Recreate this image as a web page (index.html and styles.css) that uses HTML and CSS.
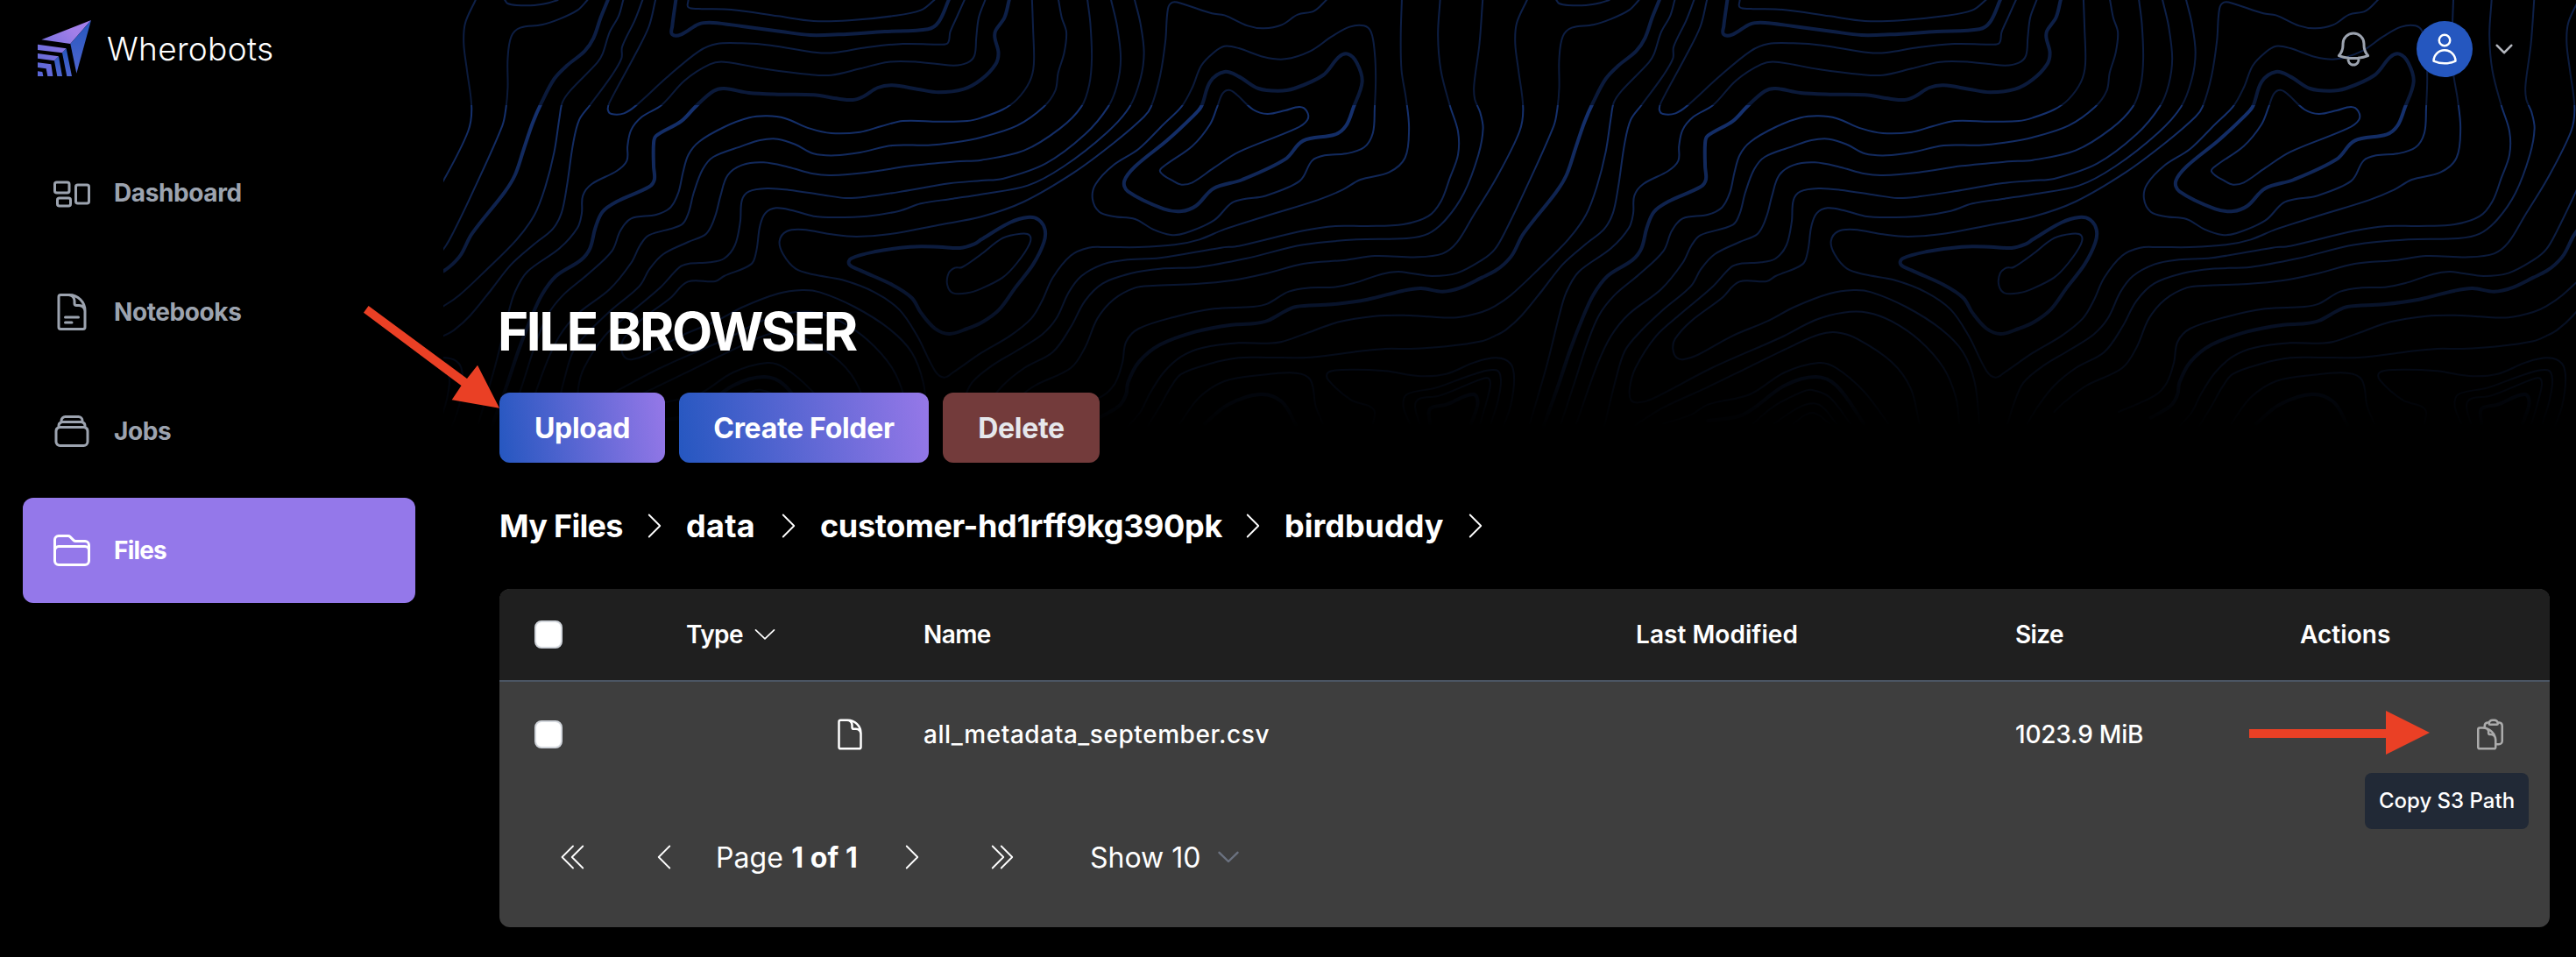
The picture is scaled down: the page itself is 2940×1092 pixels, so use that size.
FILE: index.html
```
<!DOCTYPE html>
<html lang="en">
<head>
<meta charset="utf-8">
<title>Wherobots - File Browser</title>
<link rel="stylesheet" href="styles.css">
</head>
<body>
<div class="app">
  <svg class="contours" viewBox="15 0 5963 1470" preserveAspectRatio="none" aria-hidden="true"></svg>

  <aside class="sidebar">
    <div class="brand">
      <svg class="brand-mark" viewBox="129 72 183 192">
        <defs>
          <linearGradient id="lilac" gradientUnits="userSpaceOnUse" x1="130" y1="240" x2="250" y2="110"><stop offset="0" stop-color="#5a66d6"/><stop offset="1" stop-color="#a27fe9"/></linearGradient>
          <linearGradient id="blue" x1="0" y1="0" x2="0" y2="1"><stop offset="0" stop-color="#2456bd"/><stop offset="1" stop-color="#5066d0"/></linearGradient>
        </defs>
        <path fill="url(#lilac)" d="M312 72L142 139L241 153ZM129 155L227 169L213 184L129 174ZM129 186L201 196L186 211L129 203ZM129 217L175 223L181 264H163L158 238L129 234ZM129 247L145 249L148 264H129Z"/>
        <path fill="url(#blue)" d="M312 72L241 153L262 254Z"/>
        <path fill="url(#blue)" d="M227 169L246 264H229L213 184ZM201 196L213 264H196L186 211Z"/>
      </svg>
      <span class="brand-name">Wherobots</span>
    </div>
    <nav class="nav">
      <a class="nav-item">
        <svg class="icon-lg" viewBox="0 0 24 24"><path d="M2.25 7.125C2.25 6.504 2.754 6 3.375 6h6c.621 0 1.125.504 1.125 1.125v3.75c0 .621-.504 1.125-1.125 1.125h-6a1.125 1.125 0 01-1.125-1.125v-3.75zM14.25 8.625c0-.621.504-1.125 1.125-1.125h5.25c.621 0 1.125.504 1.125 1.125v8.25c0 .621-.504 1.125-1.125 1.125h-5.25a1.125 1.125 0 01-1.125-1.125v-8.25zM3.75 16.125c0-.621.504-1.125 1.125-1.125h5.25c.621 0 1.125.504 1.125 1.125v2.25c0 .621-.504 1.125-1.125 1.125h-5.25a1.125 1.125 0 01-1.125-1.125v-2.25z"/></svg>
        <span>Dashboard</span>
      </a>
      <a class="nav-item">
        <svg class="icon-lg" viewBox="0 0 24 24"><path d="M19.5 14.25v-2.625a3.375 3.375 0 00-3.375-3.375h-1.5A1.125 1.125 0 0113.5 7.125v-1.5a3.375 3.375 0 00-3.375-3.375H8.25m0 12.75h7.5m-7.5 3H12M10.5 2.25H5.625c-.621 0-1.125.504-1.125 1.125v17.25c0 .621.504 1.125 1.125 1.125h12.75c.621 0 1.125-.504 1.125-1.125V11.25a9 9 0 00-9-9z"/></svg>
        <span>Notebooks</span>
      </a>
      <a class="nav-item">
        <svg class="icon-lg" viewBox="0 0 24 24"><path d="M6 6.878V6a2.25 2.25 0 012.25-2.25h7.5A2.25 2.25 0 0118 6v.878m-12 0c.235-.083.487-.128.75-.128h10.5c.263 0 .515.045.75.128m-12 0A2.25 2.25 0 004.5 9v.878m13.5-3A2.25 2.25 0 0119.5 9v.878m0 0a2.246 2.246 0 00-.75-.128H5.25c-.263 0-.515.045-.75.128m15 0A2.25 2.25 0 0121 12v6a2.25 2.25 0 01-2.25 2.25H5.25A2.25 2.25 0 013 18v-6c0-.98.626-1.813 1.5-2.122"/></svg>
        <span>Jobs</span>
      </a>
      <a class="nav-item nav-item-active">
        <svg class="icon-lg" viewBox="0 0 24 24"><path d="M2.25 12.75V12A2.25 2.25 0 014.5 9.75h15A2.25 2.25 0 0121.75 12v.75m-8.69-6.44l-2.12-2.12a1.5 1.5 0 00-1.061-.44H4.5A2.25 2.25 0 002.25 6v12a2.25 2.25 0 002.25 2.25h15A2.25 2.25 0 0021.75 18V9a2.25 2.25 0 00-2.25-2.25h-5.379a1.5 1.5 0 01-1.06-.44z"/></svg>
        <span>Files</span>
      </a>
    </nav>
  </aside>

  <div class="content">
    <header class="topbar">
      <svg class="icon-lg bell" viewBox="0 0 24 24"><path d="M14.857 17.082a23.848 23.848 0 005.454-1.31A8.967 8.967 0 0118 9.75v-.7V9A6 6 0 006 9v.75a8.967 8.967 0 01-2.312 6.022c1.733.64 3.56 1.085 5.455 1.31m5.714 0a24.255 24.255 0 01-5.714 0m5.714 0a3 3 0 11-5.714 0"/></svg>
      <span class="avatar"><svg class="icon" viewBox="0 0 24 24"><path d="M15.75 6a3.75 3.75 0 11-7.5 0 3.75 3.75 0 017.5 0zM4.501 20.118a7.5 7.5 0 0114.998 0A17.933 17.933 0 0112 21.75c-2.676 0-5.216-.584-7.499-1.632z"/></svg></span>
      <svg class="caret" viewBox="0 0 20 12"><path d="M1.8 1.8L10 10.2L18.2 1.8"/></svg>
    </header>

    <main class="main">
      <h1 class="title">FILE BROWSER</h1>
      <div class="actions">
        <button class="btn btn-upload">Upload</button>
        <button class="btn btn-create">Create Folder</button>
        <button class="btn btn-delete">Delete</button>
      </div>

      <div class="crumbs">
        <span class="crumb crumb-home">My Files</span>
        <svg class="icon thin" viewBox="0 0 24 24"><path d="M8.25 4.5l7.5 7.5-7.5 7.5"/></svg>
        <span class="crumb crumb-data">data</span>
        <svg class="icon thin" viewBox="0 0 24 24"><path d="M8.25 4.5l7.5 7.5-7.5 7.5"/></svg>
        <span class="crumb crumb-customer">customer-hd1rff9kg390pk</span>
        <svg class="icon thin" viewBox="0 0 24 24"><path d="M8.25 4.5l7.5 7.5-7.5 7.5"/></svg>
        <span class="crumb crumb-bird">birdbuddy</span>
        <svg class="icon thin" viewBox="0 0 24 24"><path d="M8.25 4.5l7.5 7.5-7.5 7.5"/></svg>
      </div>

      <section class="table">
        <div class="row head">
          <span class="checkbox"></span>
          <span class="type-head">Type<svg class="sort" viewBox="0 0 24 14"><path d="M1.5 1.8L12 11.8L22.5 1.8"/></svg></span>
          <span>Name</span>
          <span class="wide">Last Modified</span>
          <span>Size</span>
          <span class="wide">Actions</span>
        </div>
        <div class="row file">
          <span class="checkbox"></span>
          <span class="file-type"><svg class="icon" viewBox="0 0 24 24"><path d="M19.5 14.25v-2.625a3.375 3.375 0 00-3.375-3.375h-1.5A1.125 1.125 0 0113.5 7.125v-1.5a3.375 3.375 0 00-3.375-3.375H8.25m2.25 0H5.625c-.621 0-1.125.504-1.125 1.125v17.25c0 .621.504 1.125 1.125 1.125h12.75c.621 0 1.125-.504 1.125-1.125V11.25a9 9 0 00-9-9z"/></svg></span>
          <span class="file-name">all_metadata_september.csv</span>
          <span></span>
          <span class="file-size">1023.9 MiB</span>
          <span class="copy">
            <svg class="icon" viewBox="0 0 24 24"><path d="M11.35 3.836c-.065.21-.1.433-.1.664 0 .414.336.75.75.75h4.5a.75.75 0 00.75-.75 2.25 2.25 0 00-.1-.664m-5.8 0A2.251 2.251 0 0113.5 2.25H15c1.012 0 1.867.668 2.15 1.586m-5.8 0c-.376.023-.75.05-1.124.08C9.095 4.01 8.25 4.973 8.25 6.108V7.5m8.9-3.664c.376.023.75.05 1.124.08 1.131.094 1.976 1.057 1.976 2.192V16.5A2.25 2.25 0 0118 18.75h-2.25m-7.5-11.25H4.875c-.621 0-1.125.504-1.125 1.125v12c0 .621.504 1.125 1.125 1.125h9.75c.621 0 1.125-.504 1.125-1.125V16.5a9 9 0 00-9-9m9 9v-1.125a3.375 3.375 0 00-3.375-3.375h-.375a1.125 1.125 0 01-1.125-1.125v-1.5A3.375 3.375 0 007.5 7.5"/></svg>
            <span class="tooltip">Copy S3 Path</span>
          </span>
        </div>
        <div class="pager">
          <svg class="icon thin" viewBox="0 0 24 24"><path d="M18.75 19.5l-7.5-7.5 7.5-7.5m-6.75 15L4.5 12 12 4.5"/></svg>
          <svg class="icon thin prev" viewBox="0 0 24 24"><path d="M15.75 19.5L8.25 12l7.5-7.5"/></svg>
          <span class="page">Page <b>1 of 1</b></span>
          <svg class="icon thin" viewBox="0 0 24 24"><path d="M8.25 4.5l7.5 7.5-7.5 7.5"/></svg>
          <svg class="icon thin next" viewBox="0 0 24 24"><path d="M11.25 4.5l7.5 7.5-7.5 7.5m-6-15l7.5 7.5-7.5 7.5"/></svg>
          <span class="show">Show 10</span>
          <svg class="sort gray" viewBox="0 0 24 14"><path d="M1.5 1.8L12 12L22.5 1.8"/></svg>
        </div>
      </section>
    </main>
  </div>

  <svg class="marks" viewBox="0 0 2940 1092" aria-hidden="true">
    <path d="M420.6 349L533 432L545 416.7L570 465.7L515.7 456.3L526.5 440L415 356.7Z"/>
    <path d="M2567 832H2723V811L2773 836L2723 861V842H2567Z"/>
  </svg>
</div>
<script src="contours.js"></script>
</body>
</html>
```
FILE: styles.css
```
* { box-sizing: border-box; }
body { margin: 0; background: #000; color: #fff; font-family: Inter, "Liberation Sans", sans-serif; }
svg { display: block; fill: none; stroke: currentColor; stroke-linecap: round; stroke-linejoin: round; flex: none; }
.app { position: relative; display: flex; width: 2940px; height: 1092px; overflow: hidden; background: #000; }

.contours {
  position: absolute; left: 506px; top: 0; width: 2434px; height: 490px; stroke: #2454bd;
  -webkit-mask-image: linear-gradient(rgba(0,0,0,.78), transparent);
  mask-image: linear-gradient(rgba(0,0,0,.78), transparent);
}
.contours path { vector-effect: non-scaling-stroke; stroke-width: 2px; }
.contours .major { stroke-width: 4px; }
.marks { position: absolute; left: 0; top: 0; width: 2940px; height: 1092px; fill: #ea4025; stroke: none; }

.icon-lg { width: 48px; height: 48px; stroke-width: 1.5; }
.icon { width: 40px; height: 40px; stroke-width: 1.5; }
.thin { stroke-width: 1.1; }

.sidebar { width: 506px; padding: 24px 32px 0 26px; flex: none; }
.brand { display: flex; align-items: center; height: 64px; padding: 0 0 2px 17px; }
.brand-mark { width: 61px; height: 64px; stroke: none; }
.brand-name { font-size: 37px; font-weight: 300; margin-left: 18px; letter-spacing: .3px; }
.nav { display: flex; flex-direction: column; gap: 16px; margin-top: 72px; }
.nav-item { display: flex; align-items: center; gap: 24px; height: 120px; padding-left: 32px; border-radius: 12px; color: #9ca3af; font-size: 28px; font-weight: 700; letter-spacing: -.4px; }
.nav-item-active { background: #9478ea; color: #fff; letter-spacing: -.8px; }

.content { position: relative; flex: 1; }
.topbar { display: flex; align-items: center; justify-content: flex-end; height: 120px; padding: 0 72px 8px 0; background: rgba(0,0,0,.5); }
.bell { color: #9ca3af; margin-right: 48px; }
.avatar { display: flex; align-items: center; justify-content: center; width: 64px; height: 64px; border-radius: 50%; background: #2557bf; }
.caret { width: 20px; height: 12px; margin-left: 26px; color: #b4b7be; stroke-width: 2.6; }

.main { padding: 222px 30px 0 64px; }
.title { margin: 0 0 33px -2px; height: 73px; line-height: 73px; font-size: 60px; font-weight: 700; letter-spacing: -2.4px; }
.actions { display: flex; gap: 16px; }
.btn { height: 80px; border: 0; padding: 0; border-radius: 12px; font: 700 32px Inter, sans-serif; color: #fff; letter-spacing: -.3px; background: linear-gradient(81deg, #2557c0, #9678e8); }
.btn-upload { width: 189px; }
.btn-create { width: 285px; }
.btn-delete { width: 179px; background: #733b3b; color: #e5e7eb; }

.crumbs { display: flex; align-items: center; height: 40px; margin: 52px 0; font-size: 36px; font-weight: 700; white-space: nowrap; }
.crumb { padding-left: 16px; }
.crumb-home { width: 157px; padding-left: 0; letter-spacing: -.7px; }
.crumb-data { width: 113px; letter-spacing: .3px; }
.crumb-customer { width: 490px; letter-spacing: -.35px; }
.crumb-bird { width: 214px; }

.table { height: 386px; border-radius: 12px; background: #3e3e3e; overflow: hidden; }
.row { display: grid; grid-template-columns: 173px 271px 813px 433px 325px 1fr; align-items: center; padding: 0 48px 0 40px; font-size: 28px; white-space: nowrap; }
.head { height: 106px; background: #1f1f1f; border-bottom: 2px solid #4b5563; font-weight: 600; letter-spacing: -.6px; }
.head .wide { letter-spacing: .05px; }
.file { height: 120px; font-weight: 500; }
.checkbox { width: 32px; height: 32px; border: 2px solid #d1d5db; border-radius: 8px; background: #fff; }
.type-head { display: flex; align-items: center; gap: 13px; }
.sort { width: 24px; height: 14px; stroke-width: 1.7; }
.gray { color: #6b7280; stroke-width: 2.4; }
.file-type { display: flex; justify-content: flex-end; padding-right: 64px; }
.file-name { letter-spacing: .55px; }
.file-size { letter-spacing: -.2px; }
.copy { position: relative; justify-self: end; color: #ababab; }
.tooltip { position: absolute; top: 64px; right: -24px; width: 187px; height: 64px; line-height: 64px; text-align: center; border-radius: 8px; background: #212936; color: #fff; font-size: 24px; }
.pager { display: flex; align-items: center; height: 160px; padding-left: 64px; font-size: 32px; white-space: nowrap; }
.prev { margin-left: 64px; }
.page { width: 243px; padding-left: 39px; letter-spacing: .1px; }
.next { margin-left: 63px; }
.show { width: 226px; padding-left: 80px; }
```
FILE: contours.js
```
// Each line is a list of points. "A" points lie in the left half of the tile,
// "B" points in its right half and "P" points in the right half of the tile before it.
// A leading "*" marks a major (heavy) contour, a trailing "z" closes the loop.
const TILE = 2940;
const OFFSET = { A: 0, B: 1519, P: -1421 };
const LINES = [
  "B 1526,0 1497,80 1493,150 1502,240 1515,370 1505,450 1440,610 1375,740 1330,830 1290,868 1220,880 1100,876 1020,890 900,903 800,935 700,960 600,972 480,978 430,985 370,1025 325,1090 290,1190 250,1260 150,1320 90,1375 60,1410",
  "A 418,0 390,35 340,65 290,85 230,95 205,125 195,200 195,300 190,370 180,430 100,650 45,790 15,853 P 1400,890 1330,935 1260,945 1200,935 1165,930 1120,938 1040,970 985,983 920,985 860,998 800,1040 760,1050 650,1057 540,1085 440,1125 405,1170 395,1240 375,1310 340,1355 240,1410",
  "*A 475,0 455,60 435,130 410,175 360,225 325,270 290,350 265,420 240,510 215,600 185,660 95,800 65,870 40,905 15,928 P 1400,950 1340,985 1290,998 1230,987 1180,995 1080,1025 980,1042 880,1050 850,1065 800,1098 760,1108 700,1112 600,1135 500,1180 440,1240 410,1310 405,1350 385,1390 330,1430",
  "A 518,0 505,55 480,110 460,185 445,215 370,310 348,350 340,400 325,520 300,640 270,735 220,820 130,930 60,1010 15,1048 P 1400,1068 1330,1087 1250,1084 1180,1079 1100,1082 1000,1102 900,1145 840,1170 800,1175 720,1174 620,1190 560,1220 510,1275 470,1350 445,1410 410,1460",
  "A 572,0 550,70 515,160 513,200 485,260 425,360 395,410 378,490 360,640 345,730 320,785 270,835 205,905 150,990 90,1080 45,1130 15,1150 P 1400,1168 1300,1186 1200,1194 1130,1194 1040,1205 920,1223 800,1224 720,1225 640,1245 560,1280 530,1325 500,1390 465,1460",
  "A 608,0 590,90 550,190 480,350 475,375 485,390 520,388 555,360 640,265 730,175 780,150 850,148 930,155 1060,180 1110,180 1200,162 1300,150 1400,152 1425,148 1432,110 1450,60 1472,0",
  "A 1530,0 1512,60 1505,130 1500,190 1480,215 1440,224 1340,212 1260,212 1180,235 1100,257 1040,255 920,237 800,212 760,220 690,275 625,360 570,400 540,445 530,500 528,550 500,585 430,630 405,670 402,730 390,780 340,850 250,930 215,1000 195,1080 175,1180 156,1270 113,1450",
  "*B 78,0 65,60 40,105 38,130 48,180 40,220 0,272 A 1470,305 1400,316 1340,305 1270,292 1230,300 1190,330 1160,342 1120,338 1050,325 960,323 870,318 800,303 770,312 720,365 680,415 610,465 603,490 603,570 605,615 590,640 500,690 460,725 440,780 425,850 400,890 330,945 290,1010 260,1090 225,1200 195,1310 151,1460",
  "*A 665,0 655,90 655,118 680,118 730,82 770,78 850,90 960,108 1040,120 1120,118 1250,108 1370,100 1400,75 1428,0",
  "A 700,0 700,25 730,30 820,33 950,55 1050,72 1150,70 1270,55 1350,35 1388,0",
  "A 187,0 195,12 220,18 270,18 310,10 335,0",
  "B 142,0 145,100 147,220 135,280 100,340 60,375 0,403 A 1480,414 1400,416 1300,414 1240,432 1180,452 1100,456 1040,440 970,405 920,397 870,403 800,435 730,485 700,530 685,590 672,660 650,710 610,735 540,748 510,790 486,860 418,940 350,1010 306,1080 272,1180 243,1290 200,1450",
  "B 216,0 225,60 238,110 232,180 215,250 207,310 175,365 100,430 0,470 A 1440,488 1370,497 1270,498 1180,522 1110,532 1050,526 1000,495 950,476 900,480 850,500 770,537 740,580 715,660 700,730 680,770 590,805 565,840 540,900 480,990 390,1075 340,1150 301,1250 243,1450",
  "B 297,0 305,80 309,200 302,290 280,365 220,440 120,515 0,548 A 1450,553 1320,568 1200,590 1100,600 1050,595 980,572 910,556 850,565 810,600 790,670 775,740 750,800 700,828 630,870 592,920 563,980 486,1060 418,1140 379,1200 355,1290 321,1460",
  "B 363,0 380,90 390,200 380,290 355,365 290,460 180,560 60,612 0,618 A 1430,628 1300,655 1200,673 1140,678 1080,668 980,650 920,645 870,655 850,685 845,760 830,840 800,885 760,898 700,903 675,915 621,985 534,1075 466,1150 408,1260 392,1330 396,1370 418,1378 456,1365 621,1260 815,1155 912,1095 989,1070 1057,1070 1125,1100 1202,1165 1270,1260 1304,1360 1314,1450",
  "B 429,0 445,80 455,180 445,270 415,365 350,455 230,570 130,635 0,665 A 1440,680 1350,697 1290,722 1200,740 1110,744 1050,740 990,720 945,712 915,730 900,775 890,860 875,905 800,945 775,963 699,964 650,1020 563,1100 519,1160 513,1195 524,1225 544,1230 582,1215 679,1150 776,1100 854,1050 951,1005 1018,993 1067,1000 1164,1050 1261,1125 1324,1205 1357,1310 1370,1450",
  "B 965,0 930,38 885,50 840,85 790,97 745,88 680,52 645,46 560,12 535,8 522,30 515,140 500,260 475,365 455,400 370,490 260,590 120,690 0,742 A 1400,770 1260,802 1170,810 1100,802 1020,786 975,792 955,825 965,870 1000,920 1050,940 1130,958 1220,1000 1290,1060 1340,1150 1390,1270 1415,1292 1440,1275 1519,1208 B 80,1150 140,1090 170,1030 200,950 250,875 300,848 350,846 440,846 540,838 610,820 680,785 800,738 940,685 1010,650 1060,615 1140,590 1185,540 1196,440 1188,340 1175,240 1173,120 1176,0",
  "*B 0,820 A 1500,835 1460,849 1400,845 1320,845 1220,862 1155,885 1150,905 1180,925 1270,975 1325,1020 1350,1070 1390,1125 1430,1143 1480,1125 B 0,1105 50,1060 95,985 145,905 175,830 178,785 160,752 130,744 80,762 z",
  "B 0,870 60,815 110,800 135,805 135,835 100,900 60,950 0,988 A 1480,1003 1440,1003 1424,975 1428,935 1445,917 1465,915 z",
  "B 1283,0 1277,120 1285,240 1310,360 1333,450 1333,530 1310,610 1285,690 1250,740 1180,768 1080,774 990,774 900,790 720,842 670,848 500,883 400,890 340,905 280,945 245,1000 210,1090 170,1145 100,1200 32,1250 A 1493,1310 1464,1390 1449,1450",
  "B 1402,0 1393,150 1378,290 1380,340 1395,385 1403,440 1390,530 1350,660 1300,750 1250,800 1190,816 1050,820 900,838 740,885 610,914 500,920 420,935 340,970 290,1030 250,1120 200,1205 120,1260 60,1320 15,1390 -15,1450",
  "B 1100,370 1103,270 1100,180 1090,110 1070,88 1030,92 980,125 920,175 850,202 790,195 720,165 680,158 650,180 615,225 590,300 560,365 510,425 440,510 370,565 320,630 311,680 330,725 370,741 430,750 480,785 530,804 570,798 650,755 700,695 740,680 790,672 890,620 925,550 960,532 1020,526 1070,505 1095,455 z",
  "*B 615,365 640,280 680,246 720,262 775,303 830,311 875,303 955,258 1000,195 1025,185 1050,215 1065,280 1040,370 1020,430 990,460 900,482 850,545 730,615 650,645 600,705 560,723 510,715 410,655 400,620 430,570 520,480 590,400 z",
  "B 660,365 675,320 693,308 715,325 760,375 800,390 850,378 890,366 910,380 912,410 880,440 720,520 650,575 590,625 560,632 540,622 500,587 515,565 590,500 640,425 z",
  "B 555,1450 610,1360 680,1305 780,1284 880,1277 920,1300 935,1390 955,1450",
  "*B 625,1450 690,1385 780,1350 840,1375 880,1455",
  "B 1095,1450 1100,1410 1085,1390 1035,1370 970,1300 970,1275 1010,1266 1130,1270 1220,1287 1300,1280 1380,1240 1440,1225 1480,1245 1490,1300 1480,1390 1460,1460",
  "B 1198,1450 1180,1390 1190,1350 1270,1328 1380,1280 1440,1267 1453,1300 1445,1370 1425,1450",
  "B 1225,1450 1213,1390 1225,1365 1280,1355 1400,1297 1420,1297 1422,1330 1395,1450",
  "*B 1255,1450 1255,1400 1300,1385 1375,1350 1388,1380 1370,1450",
  "A 408,1455 486,1395 602,1330 728,1255 854,1180 921,1145 970,1138 1028,1160 1125,1240 1178,1330 1202,1450",
  "A 486,1450 563,1420 611,1385 728,1350 825,1275 921,1242 970,1260 1047,1340 1115,1450",
  "*A 611,1440 708,1420 825,1320 912,1290 970,1320 1047,1450",
  "A 737,1450 796,1390 873,1342 902,1335 951,1360 1009,1450",
  "A 796,1450 873,1390 921,1385 970,1450",
  "A 849,1450 902,1413 951,1450"
];

function points(line) {
  let dx = 0;
  const out = [];
  for (const token of line.split(" ")) {
    if (token in OFFSET) { dx = OFFSET[token]; continue; }
    if (token === "z") continue;
    const [x, y] = token.split(",").map(Number);
    out.push([x + dx, y]);
  }
  return out;
}

// Catmull-Rom spline through the points, written as cubic Beziers.
function smooth(p, closed) {
  const n = p.length;
  const at = i => closed ? p[(i + n) % n] : p[Math.max(0, Math.min(n - 1, i))];
  let d = "M" + p[0];
  for (let i = 0; i < (closed ? n : n - 1); i++) {
    const [a, b, c, e] = [at(i - 1), at(i), at(i + 1), at(i + 2)];
    const len = Math.hypot(c[0] - b[0], c[1] - b[1]);
    const handle = (u, v) => {
      const t = [v[0] - u[0], v[1] - u[1]];
      const l = Math.hypot(...t) || 1;
      return [t[0] / l * len / 3, t[1] / l * len / 3];
    };
    const h1 = handle(a, c), h2 = handle(b, e);
    d += `C${b[0] + h1[0]},${b[1] + h1[1]} ${c[0] - h2[0]},${c[1] - h2[1]} ${c}`;
  }
  return d + (closed ? "Z" : "");
}

const svg = document.querySelector(".contours");
for (let tile = -1; tile <= 2; tile++) {
  for (const raw of LINES) {
    const major = raw[0] === "*";
    const path = document.createElementNS("http://www.w3.org/2000/svg", "path");
    path.setAttribute("d", smooth(points(raw.replace("*", "")), raw.endsWith("z")));
    path.setAttribute("transform", `translate(${tile * TILE})`);
    if (major) path.setAttribute("class", "major");
    svg.append(path);
  }
}
```
